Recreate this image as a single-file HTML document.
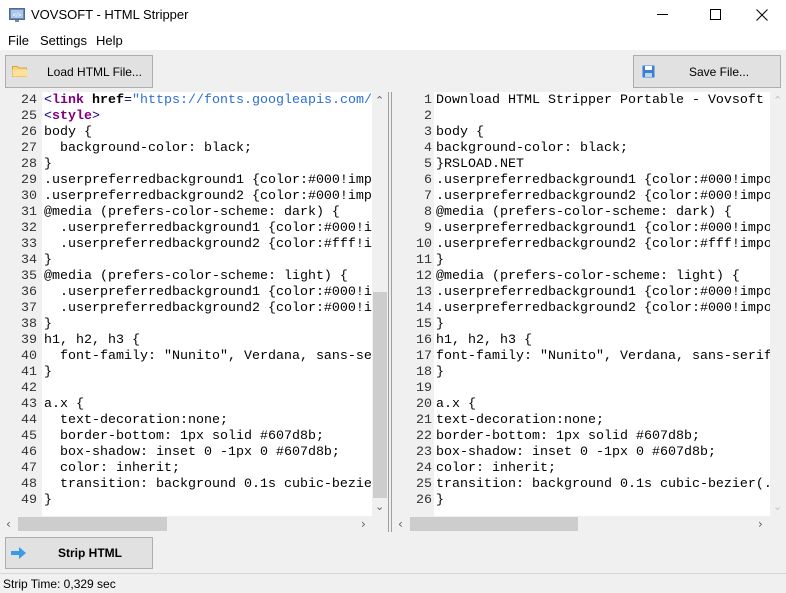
<!DOCTYPE html>
<html><head><meta charset="utf-8"><style>
*{margin:0;padding:0;box-sizing:border-box}
body{width:786px;height:593px;background:#f0f0f0;position:relative;overflow:hidden;font-family:"Liberation Sans",sans-serif;font-size:12px;color:#000}
.abs{position:absolute}
.title{left:0;top:0;width:786px;height:30px;background:#fff}
.menu{left:0;top:30px;width:786px;height:20px;background:#fff}
.btn{position:absolute;background:#e1e1e1;border:1px solid #adadad;height:33px;width:148px;font-size:12px}
.code{position:absolute;background:#fff;font-family:"Liberation Mono",monospace;font-size:13.33px;line-height:16px;white-space:pre;overflow:hidden}
.gut{position:absolute;font-family:"Liberation Mono",monospace;font-size:13.33px;line-height:16px;white-space:pre;text-align:right;color:#333}
.sb{position:absolute;background:#f0f0f0}
.th{position:absolute;background:#cdcdcd}
.ar{position:absolute;color:#606060;font-size:11px;font-family:"DejaVu Sans",sans-serif}
.t{color:#800080;font-weight:bold}.n{color:#000080}.s{color:#2b6fd6}.b{font-weight:bold}
</style></head><body>
<div class="abs title"></div>
<svg class="abs" style="left:9px;top:7px" width="16" height="16"><rect x="0.5" y="1.5" width="15" height="11" fill="#6a8db5" stroke="#506a90"/><rect x="2" y="3" width="12" height="8" fill="#a9c7e8"/><text x="8" y="10" font-size="6" text-anchor="middle" fill="#fff" font-family="Liberation Sans">&lt;/&gt;</text><rect x="6" y="13" width="4" height="2" fill="#888"/></svg>
<div class="abs" style="left:31px;top:7px;font-size:13px">VOVSOFT - HTML Stripper</div>
<div class="abs" style="left:657px;top:14px;width:11px;height:1px;background:#000"></div>
<div class="abs" style="left:710px;top:9px;width:11px;height:11px;border:1px solid #000"></div>
<svg class="abs" style="left:756px;top:9px" width="12" height="12"><path d="M0.5 0.5L11.5 11.5M11.5 0.5L0.5 11.5" stroke="#000" stroke-width="1"/></svg>
<div class="abs menu"></div>
<div class="abs" style="left:8px;top:33px;font-size:13px">File</div>
<div class="abs" style="left:40px;top:33px;font-size:13px">Settings</div>
<div class="abs" style="left:96px;top:33px;font-size:13px">Help</div>

<div class="btn" style="left:5px;top:55px"><svg class="abs" style="left:6px;top:9px" width="16" height="12"><path d="M0.5 1.5h5l1 1.5h8v8.5h-14z" fill="#f5d37a" stroke="#d8a840"/><path d="M0.5 4.5h15v7h-15z" fill="#fbe29a"/></svg><span class="abs" style="left:41px;top:9px">Load HTML File...</span></div>
<div class="btn" style="left:633px;top:55px"><svg class="abs" style="left:8px;top:9px" width="13" height="13"><rect x="0.5" y="0.5" width="12" height="12" fill="#3a7fd0"/><rect x="3" y="1" width="7" height="4" fill="#fff"/><rect x="3" y="8" width="7" height="4" fill="#bcd6f0"/></svg><span class="abs" style="left:55px;top:9px">Save File...</span></div>

<!-- left editor -->
<div class="gut" style="left:4px;top:92px;width:33px;height:424px;padding-top:1px">24
25
26
27
28
29
30
31
32
33
34
35
36
37
38
39
40
41
42
43
44
45
46
47
48
49</div>
<div class="code" style="left:42px;top:92px;width:330px;height:424px;padding:1px 0 0 2px"><span class="n">&lt;</span><span class="t">link</span> <span class="b">href</span><span class="n">=</span><span class="s">"https://fonts.googleapis.com/</span>
<span class="n">&lt;</span><span class="t">style</span><span class="n">&gt;</span>
body {
  background-color: black;
}
.userpreferredbackground1 {color:#000!imp
.userpreferredbackground2 {color:#000!imp
@media (prefers-color-scheme: dark) {
  .userpreferredbackground1 {color:#000!i
  .userpreferredbackground2 {color:#fff!i
}
@media (prefers-color-scheme: light) {
  .userpreferredbackground1 {color:#000!i
  .userpreferredbackground2 {color:#000!i
}
h1, h2, h3 {
  font-family: "Nunito", Verdana, sans-se
}

a.x {
  text-decoration:none;
  border-bottom: 1px solid #607d8b;
  box-shadow: inset 0 -1px 0 #607d8b;
  color: inherit;
  transition: background 0.1s cubic-bezie
}</div>
<div class="sb" style="left:372px;top:92px;width:16px;height:424px"></div>
<div class="th" style="left:373px;top:292px;width:14px;height:206px"></div>
<div class="ar" style="left:375px;top:94px">&#8963;</div>
<div class="ar" style="left:375px;top:500px">&#8964;</div>
<div class="sb" style="left:4px;top:516px;width:384px;height:16px"></div>
<div class="th" style="left:18px;top:517px;width:149px;height:14px"></div>
<div class="ar" style="left:6px;top:517px;font-size:12px">&#8249;</div>
<div class="ar" style="left:361px;top:517px;font-size:12px">&#8250;</div>
<div class="abs" style="left:388px;top:92px;width:1px;height:440px;background:#a0a0a0"></div>
<div class="abs" style="left:391px;top:92px;width:1px;height:440px;background:#a0a0a0"></div>

<!-- right editor -->
<div class="gut" style="left:394px;top:92px;width:38px;height:424px;padding-top:1px">1
2
3
4
5
6
7
8
9
10
11
12
13
14
15
16
17
18
19
20
21
22
23
24
25
26</div>
<div class="code" style="left:434px;top:92px;width:336px;height:424px;padding:1px 0 0 2px">Download HTML Stripper Portable - Vovsoft

body {
background-color: black;
}RSLOAD.NET
.userpreferredbackground1 {color:#000!impo
.userpreferredbackground2 {color:#000!impo
@media (prefers-color-scheme: dark) {
.userpreferredbackground1 {color:#000!impo
.userpreferredbackground2 {color:#fff!impo
}
@media (prefers-color-scheme: light) {
.userpreferredbackground1 {color:#000!impo
.userpreferredbackground2 {color:#000!impo
}
h1, h2, h3 {
font-family: "Nunito", Verdana, sans-serif
}

a.x {
text-decoration:none;
border-bottom: 1px solid #607d8b;
box-shadow: inset 0 -1px 0 #607d8b;
color: inherit;
transition: background 0.1s cubic-bezier(.
}</div>
<div class="sb" style="left:770px;top:92px;width:16px;height:424px"></div>
<div class="ar" style="left:773px;top:94px;color:#c0c0c0">&#8963;</div>
<div class="ar" style="left:773px;top:500px;color:#c0c0c0">&#8964;</div>
<div class="sb" style="left:394px;top:516px;width:392px;height:16px"></div>
<div class="th" style="left:410px;top:517px;width:168px;height:14px"></div>
<div class="ar" style="left:398px;top:517px;font-size:12px">&#8249;</div>
<div class="ar" style="left:758px;top:517px;font-size:12px">&#8250;</div>

<div class="btn" style="left:5px;top:537px;height:32px"><svg class="abs" style="left:5px;top:8px" width="16" height="14"><path d="M0 5h8V1l7 6-7 6V9H0z" fill="#3a9ae8"/></svg><span class="abs" style="left:52px;top:8px;font-weight:bold">Strip HTML</span></div>
<div class="abs" style="left:0;top:573px;width:786px;height:1px;background:#d7d7d7"></div>
<div class="abs" style="left:3px;top:577px;font-size:12px">Strip Time: 0,329 sec</div>
</body></html>
